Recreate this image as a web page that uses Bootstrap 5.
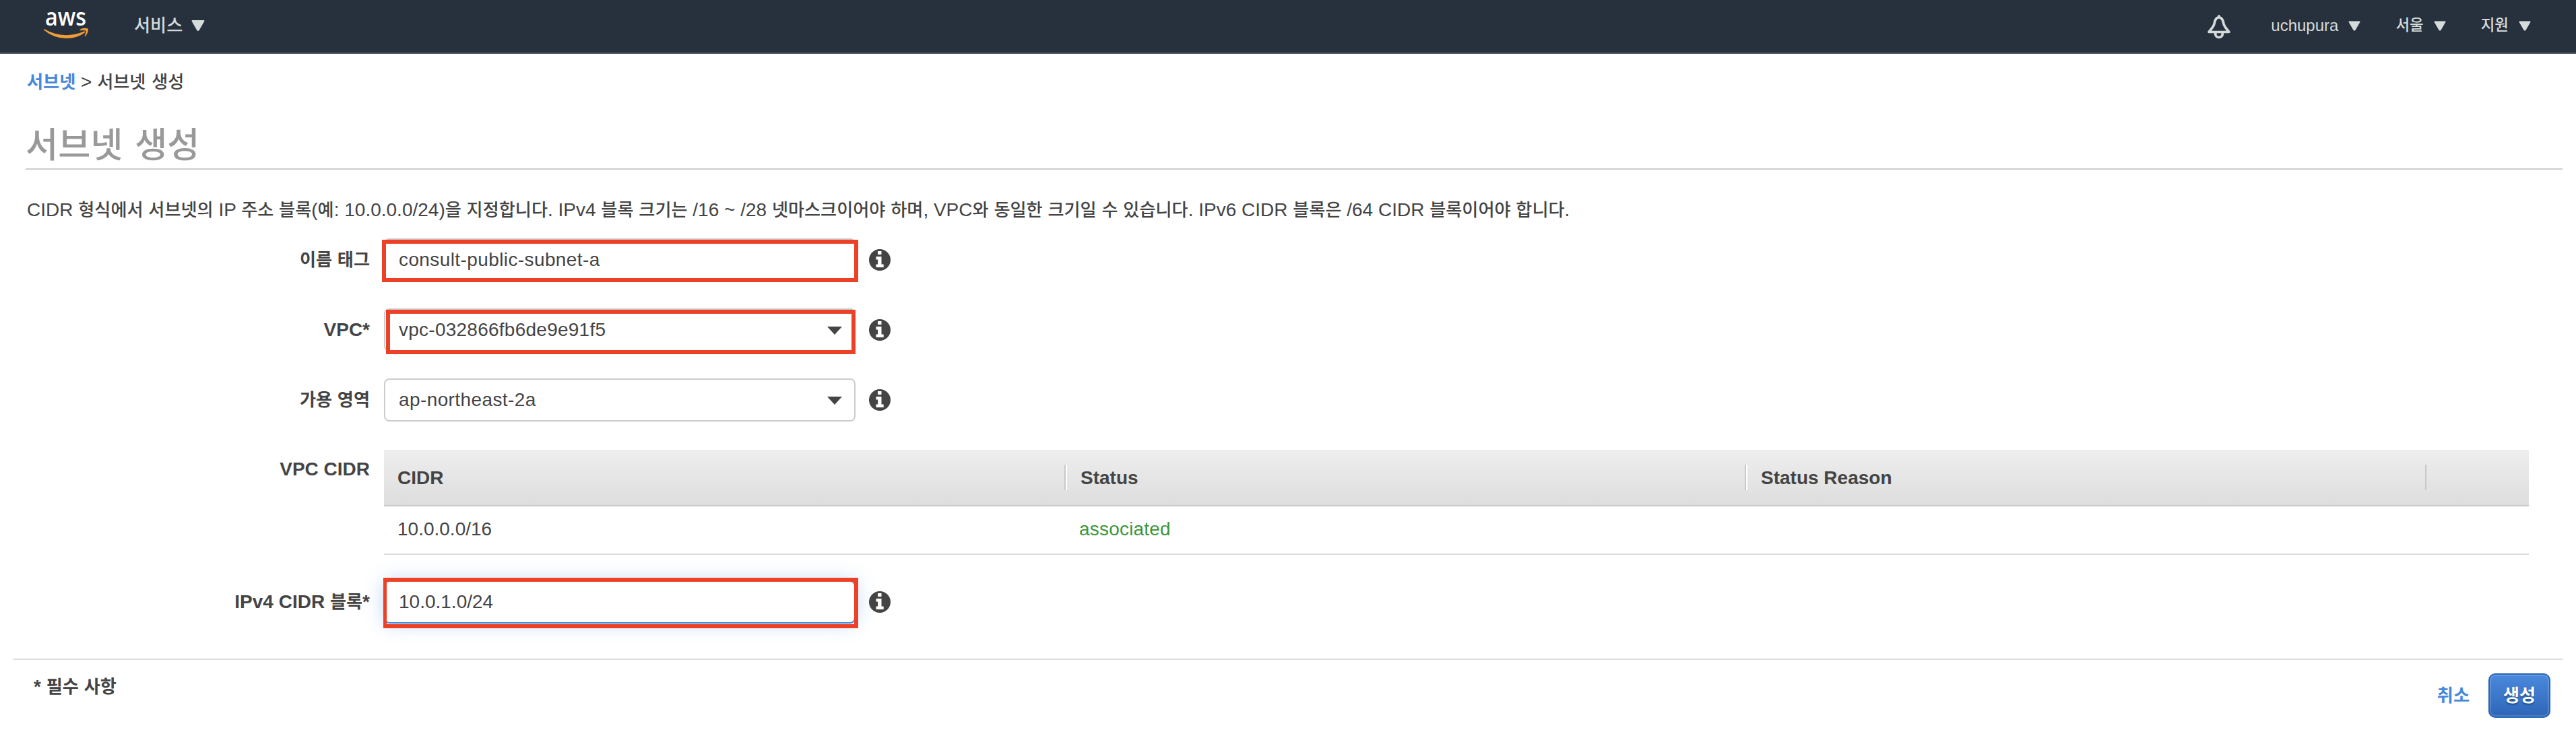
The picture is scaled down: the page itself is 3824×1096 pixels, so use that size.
<!DOCTYPE html>
<html lang="ko">
<head>
  <meta charset="UTF-8">
  <meta name="viewport" content="width=device-width, initial-scale=1.0">
  <title>서브넷 생성</title>
  <link
    href="https://cdn.jsdelivr.net/npm/bootstrap@5.3.0/dist/css/bootstrap.min.css"
    rel="stylesheet"
  >
  <style>
    body {
      background-color: #fff;
      color: #444;
      font-family: "Liberation Sans", "Noto Sans CJK KR", sans-serif;
      font-size: 28px;
      line-height: 40px;
    }
    a {
      color: #4688d9;
      text-decoration: none;
    }
    /* Hangul is set a little smaller than the Latin text next to it */
    .ko {
      font-size: .935em;
      font-weight: 500;
      line-height: 1;
      word-spacing: .02em;
    }
    .fw-bold .ko,
    label .ko,
    .btn-create .ko {
      font-weight: 700;
    }
    .crumbs .ko,
    .page-title .ko {
      word-spacing: .06em;
    }
    .topbar {
      height: 80px;
      padding: 0 67px 2px 65px;
      background-color: #27303d;
      border-bottom: 2px solid #545b64;
      color: #d5dbdb;
      font-size: 24px;
    }
    .aws-logo {
      margin-right: 67px;
      overflow: visible;
    }
    .services {
      font-size: 28px;
      gap: 13px;
    }
    .menu-item {
      margin-left: 52px;
      gap: 15px;
    }
    .menu-user {
      margin-left: 60px;
    }
    .crumbs {
      height: 84px;
      padding: 22px 40px 0;
    }
    .page-title {
      height: 88px;
      margin: 0 20px 0 38px;
      padding-top: 21px;
      border-bottom: 2px solid #ccc;
      color: #999;
      font-size: 56px;
      font-weight: 400;
      line-height: 60px;
    }
    .intro {
      margin: 40px 0 22px;
      padding-left: 40px;
    }
    .form-line {
      margin-bottom: 40px;
    }
    .form-line > label {
      flex: none;
      width: 549px;
      margin-right: 21px;
      font-weight: 700;
      text-align: right;
    }
    .field {
      width: 700px;
      height: 64px;
      margin-right: 20px;
    }
    .field .form-control {
      height: 64px;
      padding: 0 20px;
      border: 2px solid #ccc;
      border-radius: 8px;
      color: #444;
      font-size: 28px;
      line-height: 60px;
    }
    .field .name-text {
      letter-spacing: .4px;
    }
    .field #vpc {
      letter-spacing: .25px;
    }
    .field .active-input {
      border-color: #4688d9;
      box-shadow: 0 0 28px rgba(70, 136, 217, .35);
    }
    .field svg {
      position: absolute;
      top: 27px;
      right: 20px;
    }
    /* red highlight boxes laid over the fields */
    .callout-box {
      position: absolute;
      border: 6px solid #ec4126;
    }
    .callout-name { inset: 2px -4px -1px -3px; }
    .callout-vpc { inset: 2px 0 -4px 3px; }
    .callout-cidr { inset: -4px -4px -7px -1px; border-left-width: 5px; }
    .cidr-line {
      margin: 42px 0 38px;
    }
    .cidr-line > label {
      padding-top: 9px;
    }
    .cidr-table {
      width: 3184px;
      margin: 0;
      color: #444;
      table-layout: fixed;
    }
    .cidr-table > :not(caption) > * > * {
      padding: 0 20px;
      color: #444;
      background: none;
      border: 0;
    }
    .cidr-table thead tr {
      height: 84px;
      background: linear-gradient(#eee, #ddd);
      box-shadow: inset 0 -2px #c8c8c8;
    }
    .cidr-table thead th {
      vertical-align: middle;
      background: linear-gradient(#c8c8c8, #c8c8c8) right 2px top 22px / 2px 38px no-repeat,
        linear-gradient(#fff, #fff) right 0 top 22px / 2px 38px no-repeat !important;
    }
    .cidr-table thead th:nth-child(3) {
      background: linear-gradient(#c8c8c8, #c8c8c8) right 2px top 22px / 2px 38px no-repeat !important;
    }
    .cidr-table thead th:last-child {
      background: none !important;
    }
    .cidr-table tbody tr {
      height: 72px;
      box-shadow: inset 0 -2px #ddd;
    }
    .cidr-table tbody td {
      padding-top: 14px !important;
    }
    .cidr-table tbody .ok-text {
      padding-left: 18px;
      color: #3c963c;
      letter-spacing: .2px;
    }
    .page-foot {
      margin: 52px 20px 0;
      padding: 20px 18px 0 30px;
      border-top: 2px solid #ddd;
    }
    .cancel-link {
      margin-right: 28px;
    }
    .btn-create {
      width: 92px;
      height: 66px;
      padding: 0;
      border: 2px solid #2a63b5;
      border-radius: 10px;
      background: linear-gradient(#4a89dc, #2e66b8);
      box-shadow: inset 0 0 0 2px rgba(255, 255, 255, .15);
      color: #fff;
      font-size: 28px;
      font-weight: 700;
      text-shadow: 0 2px 2px rgba(0, 0, 0, .35);
    }
  </style>
</head>
<body>
  <svg class="d-none">
    <symbol id="info" viewBox="0 0 32 32">
      <circle cx="16" cy="16" r="16" fill="#444"/>
      <path d="M13 3h5.500v5H13zM10.500 11h8v11.500h3.200V27H10.500v-4.500h2.700v-7h-2.700z" fill="#fff"/>
    </symbol>
    <symbol id="tri" viewBox="0 0 20 16">
      <path d="M1.500 1h17L10.800 14.500q-.8 1-1.600 0z" fill="#d5dbdb" stroke="#d5dbdb" stroke-width="2" stroke-linejoin="round"/>
    </symbol>
    <symbol id="caret" viewBox="0 0 22 12">
      <path d="M0 0h22L11 12z" fill="#444"/>
    </symbol>
  </svg>

  <nav class="topbar d-flex align-items-center">
    <svg class="aws-logo" width="67" height="78" viewBox="0 0 67 78">
      <text x="2" y="39" textLength="61" lengthAdjust="spacingAndGlyphs" font-family="Open Sans, sans-serif" font-size="36" font-weight="600" fill="#fff">aws</text>
      <g transform="translate(0 15)" fill="#f29d38">
        <path d="M.5 29Q16 38 33 38.200Q47 38.200 60 32.500Q62 32.500 61.500 34Q50 43 33 43Q14 42.500 0 30.500Q-.2 29 .5 29z"/>
        <path d="M53.500 30Q58 26.800 65.500 28.300Q67 33 61.800 40Q60.500 40.800 60.800 39Q63.500 33 62.500 31.500Q59 30.500 54 31.200Q53 31 53.500 30z"/>
      </g>
    </svg>
    <div class="services d-flex align-items-center">
      <span class="ko">서비스</span>
      <svg width="20" height="16"><use href="#tri"/></svg>
    </div>
    <svg class="ms-auto mt-1" width="34" height="36" viewBox="0 0 32 36" preserveAspectRatio="none" fill="none" stroke="#d5dbdb" stroke-width="3.600" stroke-linejoin="round">
      <path d="M16 3.500C11 4.500 10 9 9.500 13C8.500 18 5 21 2 25.500h28C27 21 23.500 18 22.500 13C22 9 21 4.500 16 3.500z"/>
      <path d="M16 1.800v2" stroke-linecap="round"/>
      <path d="M11 26v2.500a5 5 0 0 0 10 0V26"/>
    </svg>
    <div class="menu-item menu-user d-flex align-items-center">
      <span>uchupura</span>
      <svg width="18" height="15" viewBox="0 0 20 16"><use href="#tri"/></svg>
    </div>
    <div class="menu-item d-flex align-items-center">
      <span class="ko">서울</span>
      <svg width="18" height="15" viewBox="0 0 20 16"><use href="#tri"/></svg>
    </div>
    <div class="menu-item d-flex align-items-center">
      <span class="ko">지원</span>
      <svg width="18" height="15" viewBox="0 0 20 16"><use href="#tri"/></svg>
    </div>
  </nav>

  <div class="crumbs">
    <a href="#" class="fw-bold"><span class="ko">서브넷</span></a> &gt; <span class="ko">서브넷 생성</span>
  </div>
  <h1 class="page-title"><span class="ko">서브넷 생성</span></h1>

  <p class="intro">CIDR <span class="ko">형식에서 서브넷의</span> IP <span class="ko">주소 블록</span>(<span class="ko">예</span>: 10.0.0.0/24)<span class="ko">을 지정합니다</span>. IPv4 <span class="ko">블록 크기는</span> /16 ~ /28 <span class="ko">넷마스크이어야 하며</span>, VPC<span class="ko">와 동일한 크기일 수 있습니다</span>. IPv6 CIDR <span class="ko">블록은</span> /64 CIDR <span class="ko">블록이어야 합니다</span>.</p>

  <form>
    <div class="form-line d-flex align-items-center">
      <label for="name-tag"><span class="ko">이름 태그</span></label>
      <div class="field position-relative">
        <input type="text" class="form-control name-text" id="name-tag" value="consult-public-subnet-a">
        <div class="callout-box callout-name"></div>
      </div>
      <svg width="32" height="32"><use href="#info"/></svg>
    </div>
    <div class="form-line d-flex align-items-center">
      <label for="vpc">VPC*</label>
      <div class="field position-relative">
        <input type="text" class="form-control" id="vpc" value="vpc-032866fb6de9e91f5">
        <svg width="22" height="12"><use href="#caret"/></svg>
        <div class="callout-box callout-vpc"></div>
      </div>
      <svg width="32" height="32"><use href="#info"/></svg>
    </div>
    <div class="form-line d-flex align-items-center">
      <label for="zone"><span class="ko">가용 영역</span></label>
      <div class="field position-relative">
        <input type="text" class="form-control name-text" id="zone" value="ap-northeast-2a">
        <svg width="22" height="12"><use href="#caret"/></svg>
      </div>
      <svg width="32" height="32"><use href="#info"/></svg>
    </div>
    <div class="form-line cidr-line d-flex">
      <label>VPC CIDR</label>
      <table class="table cidr-table">
        <colgroup>
          <col style="width: 1014px">
          <col style="width: 1010px">
          <col style="width: 1010px">
          <col>
        </colgroup>
        <thead>
          <tr>
            <th>CIDR</th>
            <th>Status</th>
            <th>Status Reason</th>
            <th></th>
          </tr>
        </thead>
        <tbody>
          <tr>
            <td>10.0.0.0/16</td>
            <td class="ok-text">associated</td>
            <td></td>
            <td></td>
          </tr>
        </tbody>
      </table>
    </div>
    <div class="form-line d-flex align-items-center">
      <label for="cidr-block">IPv4 CIDR <span class="ko">블록</span>*</label>
      <div class="field position-relative">
        <input type="text" class="form-control active-input" id="cidr-block" value="10.0.1.0/24">
        <div class="callout-box callout-cidr"></div>
      </div>
      <svg width="32" height="32"><use href="#info"/></svg>
    </div>
  </form>

  <footer class="page-foot d-flex">
    <div class="fw-bold">* <span class="ko">필수 사항</span></div>
    <div class="ms-auto d-flex align-items-center">
      <a href="#" class="cancel-link fw-bold"><span class="ko">취소</span></a>
      <button type="button" class="btn btn-create"><span class="ko">생성</span></button>
    </div>
  </footer>

  <script src="https://cdn.jsdelivr.net/npm/bootstrap@5.3.0/dist/js/bootstrap.bundle.min.js"></script>
</body>
</html>
